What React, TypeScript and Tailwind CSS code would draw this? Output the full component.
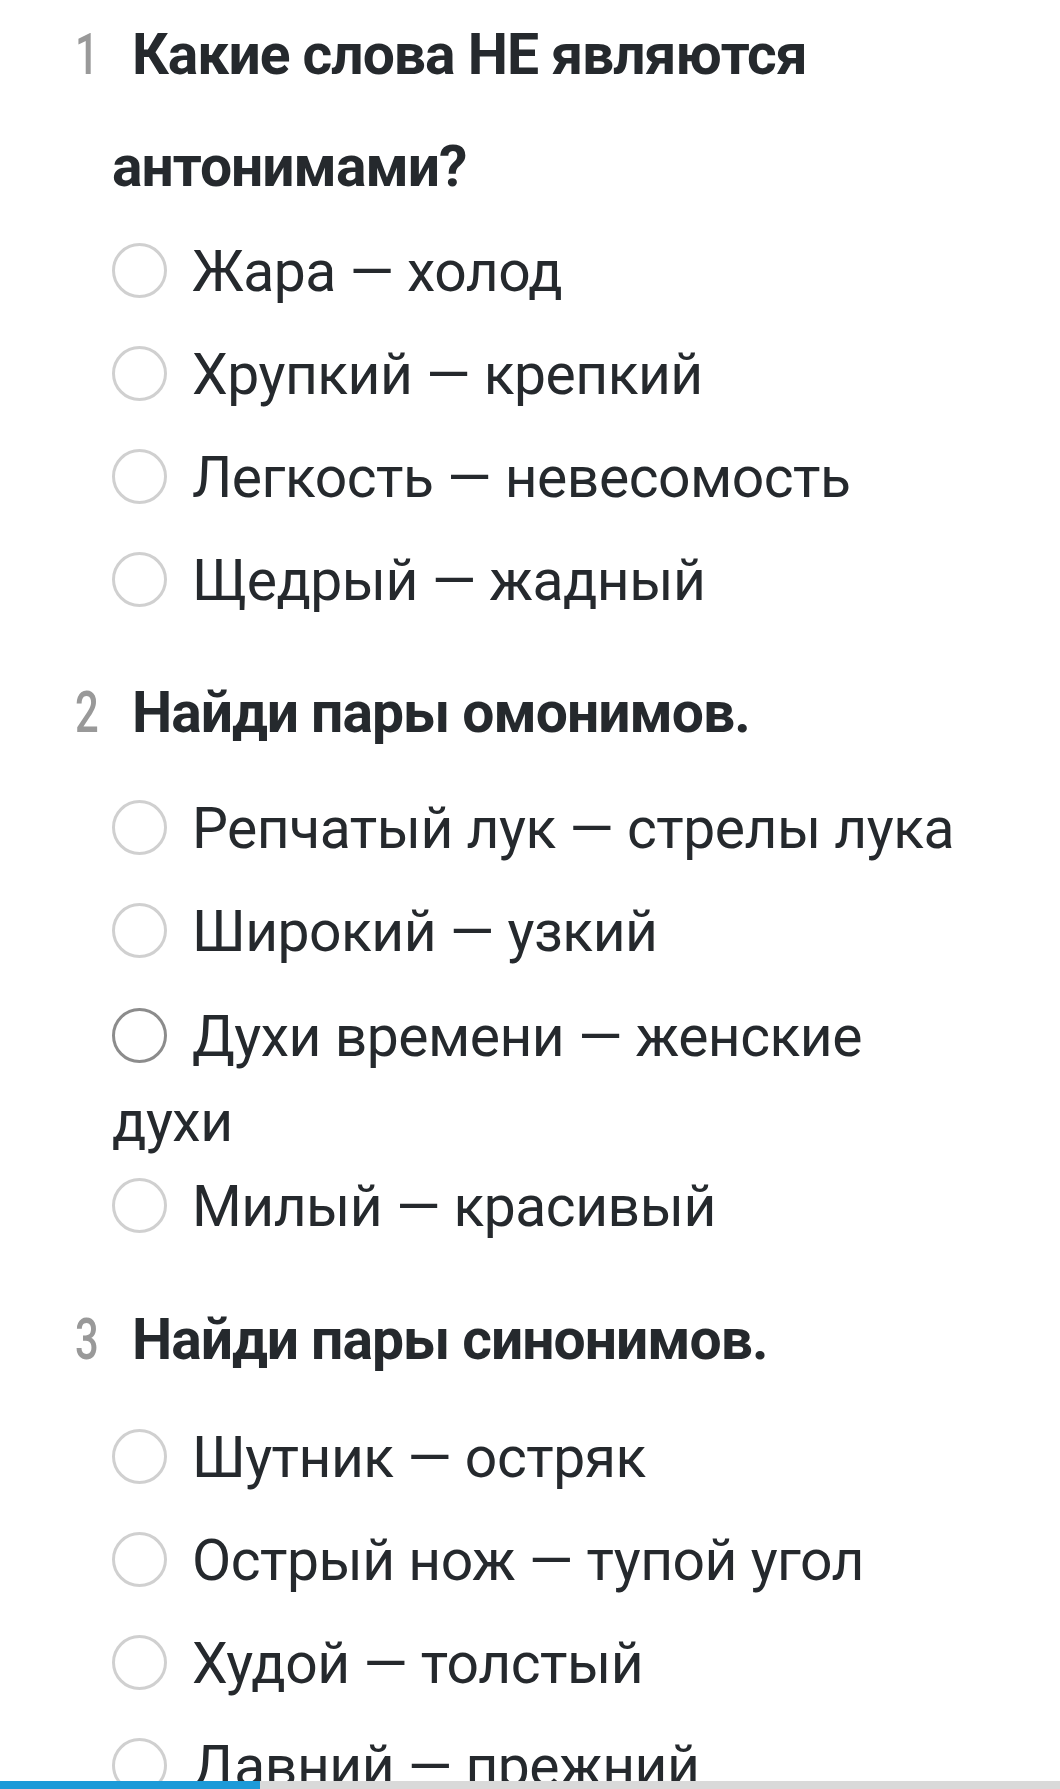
const questions = [
  {
    num: "1",
    title: "Какие слова НЕ являются антонимами?",
    top: "-mt-[2px]",
    gap: "mt-[6px]",
    options: ["Жара — холод", "Хрупкий — крепкий", "Легкость — невесомость", "Щедрый — жадный"],
  },
  {
    num: "2",
    title: "Найди пары омонимов.",
    top: "mt-[33px]",
    gap: "mt-[17px]",
    options: ["Репчатый лук — стрелы лука", "Широкий — узкий", "Духи времени — женские духи", "Милый — красивый"],
  },
  {
    num: "3",
    title: "Найди пары синонимов.",
    top: "mt-[34px]",
    gap: "mt-[19px]",
    options: ["Шутник — остряк", "Острый нож — тупой угол", "Худой — толстый", "Давний — прежний"],
  },
];

function Option({ text, margin, active }: { text: string; margin: string; active: boolean }) {
  return (
    <div className={"text-[57px] leading-[85px] tracking-[-0.5px] " + margin}>
      <span
        className={
          "mr-[25px] inline-block size-[55px] rounded-full border-[3px] align-[-7px] " +
          (active ? "border-[#8c8c8c]" : "border-[#d0d0d0]")
        }
      />
      {text}
    </div>
  );
}

export default function App() {
  return (
    <div
      className="relative h-[1789px] overflow-hidden bg-white pl-[112px] pr-[80px] text-[#25292d]"
      style={{ fontFamily: "Roboto, 'Noto Sans', sans-serif" }}
    >
      {questions.map((q, qi) => (
        <div key={q.num}>
          <h2 className={"text-[57px] leading-[112px] font-bold tracking-[-1px] " + q.top}>
            <span className="-ml-[37px] inline-block w-[57px] text-[58px] font-medium tracking-normal text-[#999999]">
              <span className="inline-block origin-left scale-x-[0.72]">{q.num}</span>
            </span>
            {q.title}
          </h2>
          {q.options.map((o, i) => {
            const active = qi === 1 && i === 2;
            const afterWrap = qi === 1 && i === 3;
            const margin = i === 0 ? q.gap : afterWrap ? "mt-0" : active ? "mt-[20px]" : "mt-[18px]";
            return <Option key={o} text={o} margin={margin} active={active} />;
          })}
        </div>
      ))}
      <div className="fixed bottom-0 left-0 flex h-[8px] w-full bg-[#d9d9d9]">
        <div className="h-full w-[260px] bg-[#1c9ad8]" />
      </div>
    </div>
  );
}
